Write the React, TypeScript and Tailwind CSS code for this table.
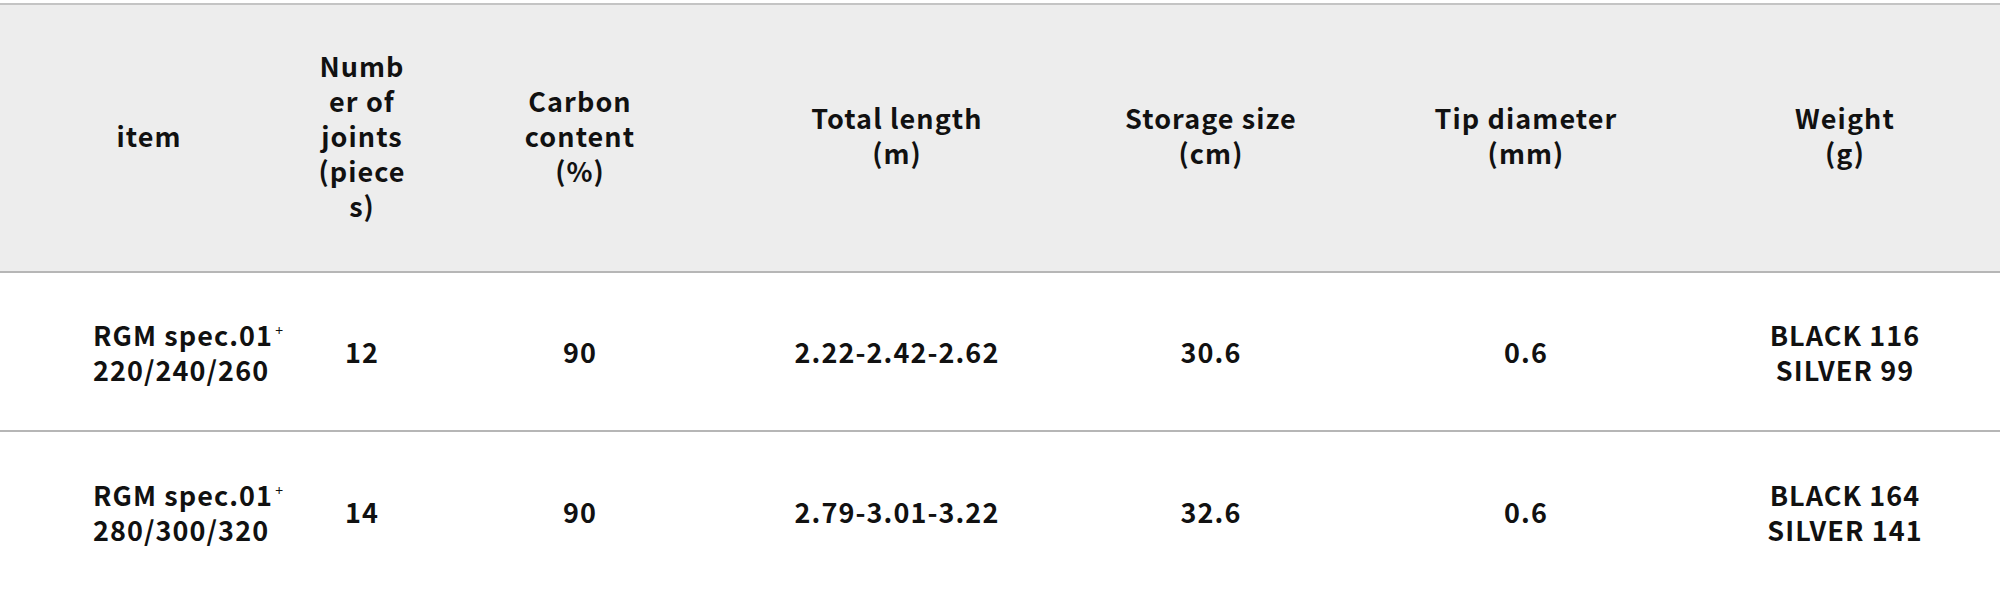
const headers = [
  { lines: ["item"] },
  { lines: ["Numb", "er of", "joints", "(piece", "s)"] },
  { lines: ["Carbon", "content", "(%)"] },
  { lines: ["Total length", "(m)"] },
  { lines: ["Storage size", "(cm)"] },
  { lines: ["Tip diameter", "(mm)"] },
  { lines: ["Weight", "(g)"] },
];

const rows = [
  {
    item: ["RGM spec.01", "220/240/260"],
    joints: "12",
    carbon: "90",
    length: "2.22-2.42-2.62",
    storage: "30.6",
    tip: "0.6",
    weight: ["BLACK 116", "SILVER 99"],
  },
  {
    item: ["RGM spec.01", "280/300/320"],
    joints: "14",
    carbon: "90",
    length: "2.79-3.01-3.22",
    storage: "32.6",
    tip: "0.6",
    weight: ["BLACK 164", "SILVER 141"],
  },
];

const cols = "grid grid-cols-[298px_128px_308px_326px_302px_328px_1fr]";

export default function App() {
  return (
    <div
      className="min-h-screen bg-white pt-[3px] text-[27px] leading-[35px] font-bold tracking-[0.04em] text-[#111]"
      style={{ fontFamily: '"Noto Sans CJK JP", "Noto Sans", sans-serif' }}
    >
      <div className="border-t-2 border-[#c4c4c4]">
        {/* header */}
        <div className={`${cols} h-[268px] bg-[#ededed] border-b-2 border-[#b6b6b6]`}>
          {headers.map((h, i) => (
            <div key={i} className="flex flex-col items-center justify-center pb-[6px] text-center">
              {h.lines.map((l) => (
                <span key={l}>{l}</span>
              ))}
            </div>
          ))}
        </div>

        {rows.map((r, i) => (
          <div
            key={i}
            className={`${cols} h-[159px] ${i === 0 ? "border-b-2 border-[#b6b6b6]" : ""}`}
          >
            <div className="flex flex-col justify-center pl-[93px]">
              <div className="h-[35px] whitespace-nowrap">
                {r.item[0]}
                <span className="relative top-[6px] ml-[2px] inline-block align-top text-[14px] leading-[14px] font-normal">+</span>
              </div>
              <div className="h-[35px]">{r.item[1]}</div>
            </div>
            <div className="flex items-center justify-center">{r.joints}</div>
            <div className="flex items-center justify-center">{r.carbon}</div>
            <div className="flex items-center justify-center">{r.length}</div>
            <div className="flex items-center justify-center">{r.storage}</div>
            <div className="flex items-center justify-center">{r.tip}</div>
            <div className="flex flex-col items-center justify-center text-center">
              <span>{r.weight[0]}</span>
              <span>{r.weight[1]}</span>
            </div>
          </div>
        ))}
      </div>
    </div>
  );
}
